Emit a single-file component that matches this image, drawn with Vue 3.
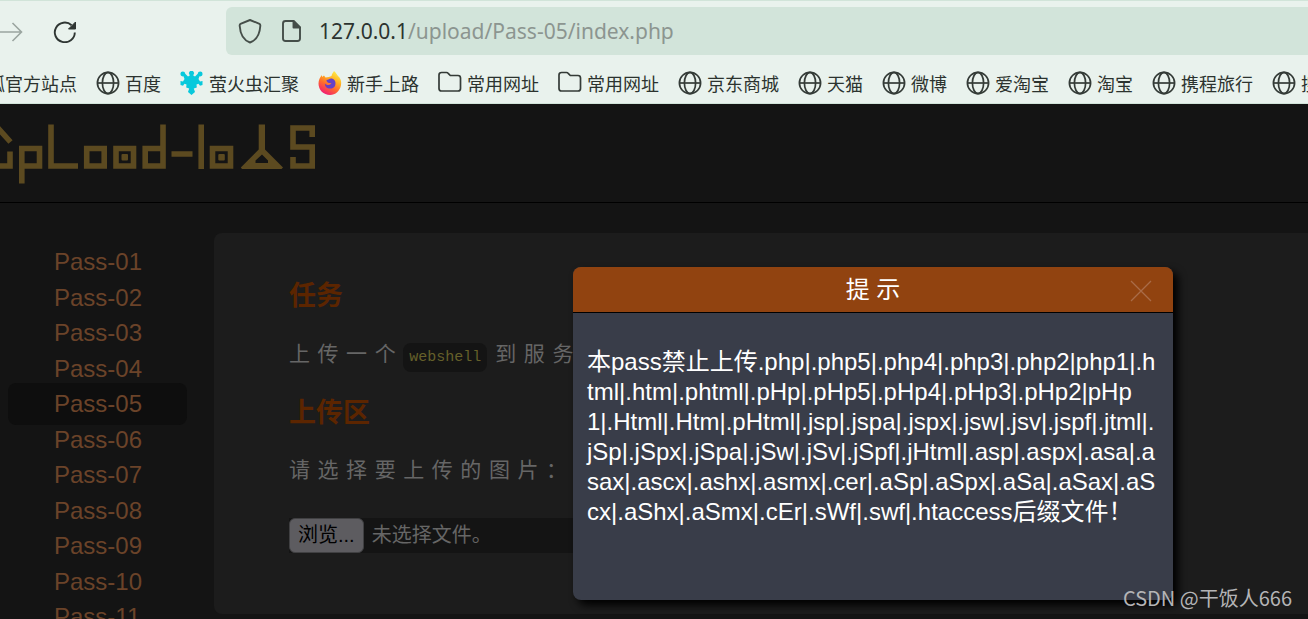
<script setup>
const bookmarks = [
  { icon: '', label: '火狐官方站点' },
  { icon: 'globe', label: '百度' },
  { icon: 'swarm', label: '萤火虫汇聚' },
  { icon: 'fox', label: '新手上路' },
  { icon: 'folder', label: '常用网址' },
  { icon: 'folder', label: '常用网址' },
  { icon: 'globe', label: '京东商城' },
  { icon: 'globe', label: '天猫' },
  { icon: 'globe', label: '微博' },
  { icon: 'globe', label: '爱淘宝' },
  { icon: 'globe', label: '淘宝' },
  { icon: 'globe', label: '携程旅行' },
  { icon: 'globe', label: '搜' },
]
const passes = ['01', '02', '03', '04', '05', '06', '07', '08', '09', '10', '11']
const current = '05'
const hint = [
  '本pass禁止上传.php|.php5|.php4|.php3|.php2|php1|.h',
  'tml|.htm|.phtml|.pHp|.pHp5|.pHp4|.pHp3|.pHp2|pHp',
  '1|.Html|.Htm|.pHtml|.jsp|.jspa|.jspx|.jsw|.jsv|.jspf|.jtml|.',
  'jSp|.jSpx|.jSpa|.jSw|.jSv|.jSpf|.jHtml|.asp|.aspx|.asa|.a',
  'sax|.ascx|.ashx|.asmx|.cer|.aSp|.aSpx|.aSa|.aSax|.aS',
  'cx|.aShx|.aSmx|.cEr|.sWf|.swf|.htaccess后缀文件！',
]
</script>

<template>
  <div class="window">
    <header class="chrome">
      <div class="toolbar">
        <button class="tool forward" type="button" aria-label="前进">
          <svg width="24" height="24" viewBox="0 -1 24 24" fill="none" stroke="#9ba5a0" stroke-width="1.6"><path d="M0 12H21M12.500 3L21.500 12L12.500 21" /></svg>
        </button>
        <button class="tool reload" type="button" aria-label="刷新">
          <svg width="24" height="24" viewBox="0 -1 24 24" fill="none" stroke="#2f3633" stroke-width="1.900"><path d="M18.600 5.200A10 9.800 0 1 0 21.800 12.500" /><path d="M22.500 2V9H15.500Z" fill="#2f3633" stroke-width="1" stroke-linejoin="round" /></svg>
        </button>
        <div class="address">
          <svg class="shield" width="24" height="26" viewBox="0 0 24 26" fill="none" stroke="#454e49" stroke-width="1.900" stroke-linejoin="round"><path d="M12 2L21.500 5.800Q22.500 6.300 22.300 8C21.800 15.500 19 22 12 24.500C5 22 2.200 15.500 1.700 8Q1.500 6.300 2.500 5.800Z" /></svg>
          <svg class="page-icon" width="20" height="24" viewBox="0 0 20 24" fill="none" stroke="#454e49" stroke-width="1.900" stroke-linejoin="round"><path d="M3.500 2H11.500L18 8.500V19.500Q18 22 15.500 22H3.500Q1 22 1 19.500V4.500Q1 2 3.500 2Z" /><path d="M11.500 2V8.500H18Z" fill="#454e49" /></svg>
          <div class="url" role="textbox" aria-label="地址"><span class="host">127.0.0.1</span>/upload/Pass-05/index.php</div>
        </div>
      </div>
      <ul class="bookmarks">
        <li v-for="(b, i) in bookmarks" :key="i">
          <a href="#">
            <svg v-if="b.icon === 'globe'" width="24" height="24" viewBox="0 0 24 24" fill="none" stroke="#343b37" stroke-width="1.700"><circle cx="12" cy="12" r="10.600" /><ellipse cx="12" cy="12" rx="5.600" ry="10.600" /><path d="M1.400 12H22.600" /></svg>
            <svg v-else-if="b.icon === 'folder'" width="24" height="24" viewBox="0 0 24 24" fill="none" stroke="#343b37" stroke-width="1.700" stroke-linejoin="round"><path d="M3.500 1.500H8.500Q9.500 1.500 10.200 2.300L12.300 4.500H20Q22.500 4.500 22.500 7V17.500Q22.500 20 20 20H3.500Q1 20 1 17.500V4Q1 1.500 3.500 1.500Z" /></svg>
            <svg v-else-if="b.icon === 'swarm'" width="24" height="24" viewBox="0 0 24 24" fill="#08c9dc">
              <circle cx="2.800" cy="3" r="2.400" /><circle cx="20.200" cy="3" r="2.400" />
              <path d="M3 4L5 2.500L8 5.500L9.800 4.500L8.800 2L10 0H13L14.200 2L13.200 4.500L15 5.500L18 2.500L20 4L18.500 8L20 10.500L22.500 10V14L20 14.800L18.500 12.800L16.500 13.500L16.800 16.500L13.800 17.500L15 21L11.500 24L8 21L9.200 17.500L6.200 16.500L6.500 13.500L4.500 12.800L3 14.800L.5 14V10L3 10.500L4.500 8Z" />
            </svg>
            <svg v-else-if="b.icon === 'fox'" width="24" height="24" viewBox="0 0 24 24">
              <defs>
                <linearGradient id="flame" x1=".8" y1="0" x2=".25" y2="1"><stop offset="0" stop-color="#fff44f" /><stop offset=".35" stop-color="#ffb022" /><stop offset=".62" stop-color="#ff6a2d" /><stop offset="1" stop-color="#f0147d" /></linearGradient>
              </defs>
              <path d="M16 0C18.500 2 19 4 20 5L21.500 6.500C23 9 23.500 11 23 14C22 20 17.500 24 12 24C5.500 24 .5 19 .5 12.500C.5 9 2 6 4 4V6L6 4.500L7.500 6.500C10 6 12 6 13.500 5C14 3 15 1.500 16 0Z" fill="url(#flame)" />
              <path d="M8.500 9C11 9 11 7 14 7.500C17 8.500 18 11 17.300 14C16.500 17 13.500 18 11 17.500C8 17 6.500 14.500 7 12.500C8 14 10 14.500 12 13.500L13.500 12.500C11.500 12 8.500 12 8.500 9Z" fill="#6541c7" />
            </svg>
            <span>{{ b.label }}</span>
          </a>
        </li>
      </ul>
    </header>

    <div class="site">
      <div class="banner">
        <svg width="330" height="98" viewBox="0 0 330 98" fill="none" stroke="#5c4a20" stroke-width="5.600" role="img" aria-label="Upload-labs">
          <path d="M-2 24L10.500 38M10 47.500V62H-2" />
          <path d="M21.800 79.500V44.500H39.500V62H21.800" />
          <path d="M51 20.500V62H78" />
          <path d="M86.700 44.500H104.200V62H86.700Z" />
          <path d="M116 44.500H133.500V62H116Z" />
          <path d="M163 20.500V62H145.200V44.500H163" />
          <path d="M171.500 50H192.500M201.200 20.500V65" />
          <path d="M212.500 44.500H230.500V62H212.500Z" />
          <path d="M312.200 33V24H293V43H312.200V62H293V53" />
          <g fill="#5c4a20" stroke="none">
            <rect x="121.500" y="50" width="6.500" height="6.500" rx="1" />
            <rect x="218.300" y="50" width="6.500" height="6.500" rx="1" />
            <path fill-rule="evenodd" d="M258.700 20.500H265V45.500L283 63.500L281.500 65H242L240.800 63.500L258.700 45.500ZM262 50.500L255.500 56.500V59H268V56.500Z" />
          </g>
        </svg>
      </div>
      <div class="columns">
        <nav>
          <ul class="passes">
            <li v-for="n in passes" :key="n"><a href="#" :class="{ active: n === current }">Pass-{{ n }}</a></li>
          </ul>
        </nav>
        <main class="panel">
          <h3>任务</h3>
          <p class="task">上传一个<code>webshell</code>到服务</p>
          <h3>上传区</h3>
          <p class="prompt">请选择要上传的图片：</p>
          <label class="file"><input type="file" /><span class="browse">浏览...</span><span>未选择文件。</span></label>
        </main>
      </div>
    </div>

    <section class="dialog" role="dialog" aria-labelledby="dialog-title">
      <div class="dialog-head">
        <h2 id="dialog-title">提 示</h2>
        <button class="close" type="button" aria-label="关闭">
          <svg width="22" height="22" viewBox="0 0 22 22" stroke="#a96c48" stroke-width="1.300"><path d="M1 1L21 21M21 1L1 21" /></svg>
        </button>
      </div>
      <p class="hint"><span v-for="line in hint" :key="line">{{ line }}</span></p>
    </section>
    <div class="watermark">CSDN @干饭人666</div>
  </div>
</template>

<style>
body { margin: 0; background: #141414; }
</style>

<style scoped>
.window {
  position: relative;
  display: flex;
  flex-direction: column;
  height: 100vh;
  overflow: hidden;
  font-family: "Liberation Sans", "Noto Sans CJK SC", sans-serif;
}
ul { list-style: none; margin: 0; padding: 0; }
h2, h3, p { margin: 0; }
a { text-decoration: none; color: inherit; }
svg { flex: none; display: block; }
button { border: 0; padding: 0; background: none; }

.chrome {
  flex: none;
  background: #e9f2ed;
  border-top: 1px solid #d1e4d9;
  border-bottom: 1px solid #d1e4d9;
}
.toolbar { display: flex; align-items: center; height: 48px; padding-top: 6px; }
.reload { margin-left: 29px; }
.address {
  flex: 1;
  display: flex;
  align-items: center;
  height: 48px;
  margin-left: 149px;
  padding-left: 12px;
  border-radius: 6px 0 0 6px;
  background: #d2e4da;
}
.page-icon { margin-left: 20px; }
.url {
  margin-left: 17px;
  font: 21px/30px "Noto Sans", sans-serif;
  white-space: nowrap;
  color: #8c9590;
}
.host { color: #2c332f; }
.bookmarks {
  display: flex;
  align-items: center;
  gap: 19px;
  box-sizing: border-box;
  height: 48px;
  margin-left: -31px;
  padding-top: 7px;
}
.bookmarks a {
  display: flex;
  align-items: center;
  gap: 5px;
  font: 18px/26px "Noto Sans CJK SC", sans-serif;
  white-space: nowrap;
  color: #2c332f;
}

.site { flex: 1; min-height: 0; background: #141414; }
.banner { height: 98px; border-bottom: 1px solid #000; }
.columns { display: flex; align-items: flex-start; padding-top: 30px; }
nav { flex: none; width: 179px; margin: 11px 27px 0 8px; }
.passes li { display: flex; align-items: center; height: 36px; }
.passes li:nth-child(even) { height: 35px; }
.passes a {
  flex: 1;
  padding-left: 46px;
  border-radius: 8px;
  font-size: 24px;
  line-height: 42px;
  color: #6b4329;
}
.passes .active { background: #0e0e0e; }

.panel {
  flex: 1;
  padding: 45px 0 61px 75px;
  border-radius: 8px 0 0 8px;
  background: #1c1c1c;
  color: #666;
}
.panel h3 { font-size: 27px; line-height: 36px; color: #5c2500; }
.panel p { font-size: 21px; line-height: 30px; letter-spacing: 0.36em; }
.panel .task { margin: 25px 0 23px; }
.panel .prompt { margin: 24px 0 33px; }
code {
  display: inline-block;
  margin-right: 8px;
  padding: 0 6px;
  border-radius: 8px;
  background: #141414;
  font: 15px/29px "Liberation Mono", monospace;
  letter-spacing: normal;
  color: #66602a;
}
.file {
  display: flex;
  align-items: center;
  gap: 8px;
  width: 450px;
  height: 35px;
  background: #141414;
  font-size: 20px;
  line-height: 33px;
}
.file input { position: absolute; width: 1px; height: 1px; opacity: 0; }
.browse {
  padding: 0 8px;
  border: 1px solid #404042;
  border-radius: 6px;
  background: #5d5c60;
  color: #000;
}

.dialog {
  position: absolute;
  top: 267px;
  left: 573px;
  width: 600px;
  border-radius: 8px;
  background: #393d49;
  box-shadow: 5px 5px 9px #000;
  color: #fff;
}
.dialog-head {
  position: relative;
  border-bottom: 1px solid #000;
  border-radius: 8px 8px 0 0;
  background: #914310;
}
.dialog h2 { font-size: 24px; font-weight: 400; line-height: 45px; text-align: center; }
.close { position: absolute; top: 13px; right: 21px; }
.hint { padding: 34px 14px 73px; font-size: 24px; line-height: 30px; white-space: nowrap; }
.hint span { display: block; }
.watermark {
  position: absolute;
  right: 16px;
  bottom: 7px;
  font: 20px/28px "Noto Sans CJK SC", sans-serif;
  color: #b4b4b6;
}
</style>
